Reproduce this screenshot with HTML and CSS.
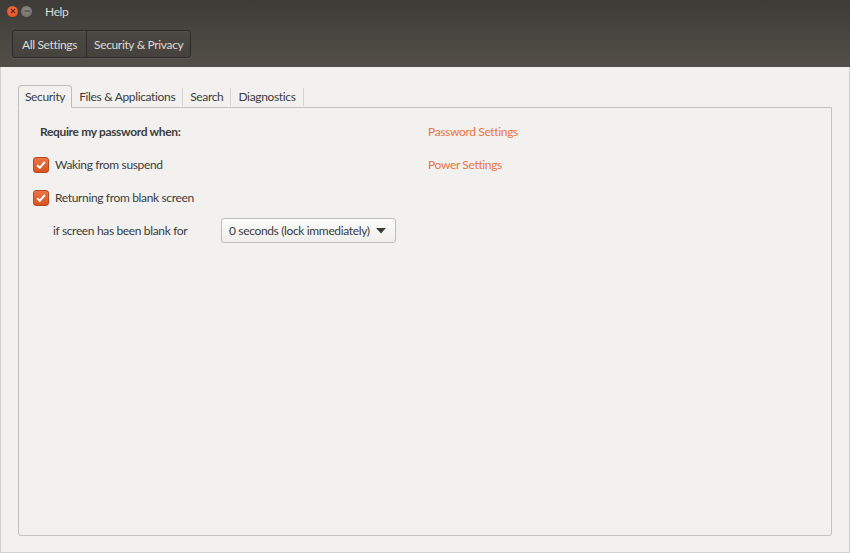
FILE: index.html
```html
<!DOCTYPE html>
<html lang="en">
  <head>
    <meta charset="UTF-8" />
    <title>Security &amp; Privacy</title>
    <link rel="stylesheet" href="styles.css">
  </head>
  <body>
    <div class="header">
      <div class="titlebar">
        <span class="win-btn close">
          <svg width="8" height="8" viewBox="0 0 8 8"><path d="M2 2 L6 6 M6 2 L2 6" stroke="#6a230c" stroke-width="1.3" /></svg>
        </span>
        <span class="win-btn minimize">
          <svg width="8" height="8" viewBox="0 0 8 8"><path d="M1.5 4 L6.5 4" stroke="#4a4a47" stroke-width="1.3" /></svg>
        </span>
        <span class="title">Help</span>
      </div>
      <div class="toolbar">
        <div class="crumbs">
          <button class="crumb first">All Settings</button>
          <button class="crumb">Security &amp; Privacy</button>
        </div>
      </div>
    </div>

    <div class="content">
      <div class="tabs">
        <div class="tab active">Security</div>
        <div class="tab">Files &amp; Applications</div>
        <div class="tab">Search</div>
        <div class="tab">Diagnostics</div>
      </div>
      <div class="panel">
        <div class="grid">
          <div class="heading">Require my password when:</div>
          <a class="link">Password Settings</a>

          <label class="check-row">
            <span class="checkbox">
              <svg width="12" height="12" viewBox="0 0 12 12"><path d="M2.2 6.2 L4.8 8.8 L9.8 3" fill="none" stroke="#fff" stroke-width="2" /></svg>
            </span>
            Waking from suspend
          </label>
          <a class="link">Power Settings</a>

          <label class="check-row">
            <span class="checkbox">
              <svg width="12" height="12" viewBox="0 0 12 12"><path d="M2.2 6.2 L4.8 8.8 L9.8 3" fill="none" stroke="#fff" stroke-width="2" /></svg>
            </span>
            Returning from blank screen
          </label>
          <div></div>

          <div class="blank-row">
            <span class="blank-label">if screen has been blank for</span>
            <button class="combo">
              <span>0 seconds (lock immediately)</span>
              <svg width="10" height="6" viewBox="0 0 10 6"><path d="M0 0 L10 0 L5 5.5 Z" fill="#3c3c3c" /></svg>
            </button>
          </div>
          <div></div>
        </div>
      </div>
    </div>
  </body>
</html>
```

FILE: styles.css
```css
body {
  margin: 0;
  width: 850px;
  height: 553px;
  overflow: hidden;
  font-family: Lato, "Noto Sans", sans-serif;
  font-size: 12px;
  letter-spacing: -0.35px;
  color: #3c3c3c;
  background: #f2f1f0;
}
.header {
  height: 67px;
  background: linear-gradient(#3c3b37, #4a4741 60%, #534f48);
}
.titlebar {
  height: 22px;
  display: flex;
  align-items: center;
  padding-left: 7px;
}
.win-btn {
  width: 11px;
  height: 11px;
  border-radius: 50%;
  margin-right: 3px;
  display: flex;
  align-items: center;
  justify-content: center;
}
.close {
  background: radial-gradient(circle at 50% 40%, #f4754a, #dd4814);
}
.minimize {
  background: radial-gradient(circle at 50% 40%, #8a8984, #6b6a66);
}
.title {
  margin-left: 10px;
  color: #dfdbd2;
}
.toolbar {
  padding: 8px 0 0 12px;
}
.crumbs {
  display: inline-flex;
  height: 28px;
  box-sizing: border-box;
  border: 1px solid #2c2b28;
  border-radius: 3px;
  background: linear-gradient(#4b4843, #45423d);
  box-shadow: inset 0 1px 0 rgba(255, 255, 255, 0.06), 0 1px 0 rgba(255, 255, 255, 0.06);
}
.crumb {
  background: none;
  border: none;
  color: #dfdbd2;
  font-family: inherit;
  font-size: 12px;
  letter-spacing: inherit;
  padding: 0 7px;
}
.crumb.first {
  padding: 0 9px;
}
.crumb + .crumb {
  border-left: 1px solid #2c2b28;
}
.content {
  height: 486px;
  box-sizing: border-box;
  border: 1px solid #d3d1cc;
  border-top: none;
  padding: 18px 17px 0 17px;
}
.tabs {
  display: flex;
  align-items: flex-end;
  height: 22px;
  position: relative;
  z-index: 1;
}
.tab {
  padding: 0 7px;
  height: 18px;
  line-height: 18px;
  border-right: 1px solid #d6d4cf;
  margin-bottom: 1px;
}
.tab.active {
  height: 21px;
  line-height: 21px;
  border: 1px solid #bfbdb8;
  border-bottom: 1px solid #f2f1f0;
  border-radius: 4px 4px 0 0;
  background: #f2f1f0;
  margin-bottom: -1px;
  padding: 0 6px;
}
.panel {
  height: 420px;
  border: 1px solid #c4c2bd;
  border-radius: 0 0 3px 3px;
  padding: 7px 0 0 14px;
}
.grid {
  display: grid;
  grid-template-columns: 395px auto;
  grid-auto-rows: 33px;
  align-items: center;
}
.heading {
  font-weight: bold;
  padding-left: 7px;
}
.link {
  color: #e9743f;
}
.check-row {
  display: flex;
  align-items: center;
}
.checkbox {
  width: 14px;
  height: 14px;
  border: 1px solid #b5481d;
  border-radius: 3px;
  background: linear-gradient(#ec7446, #d9531f);
  display: flex;
  align-items: center;
  justify-content: center;
  margin-right: 6px;
}
.blank-row {
  display: flex;
  align-items: center;
  padding-left: 20px;
}
.blank-label {
  width: 168px;
}
.combo {
  display: flex;
  align-items: center;
  justify-content: space-between;
  white-space: nowrap;
  height: 25px;
  width: 175px;
  padding: 0 9px 0 7px;
  border: 1px solid #bfbdb8;
  border-radius: 3px;
  background: linear-gradient(#fbfbfa, #f0efed);
  font-family: inherit;
  font-size: 12px;
  letter-spacing: inherit;
  color: #3c3c3c;
}
```
